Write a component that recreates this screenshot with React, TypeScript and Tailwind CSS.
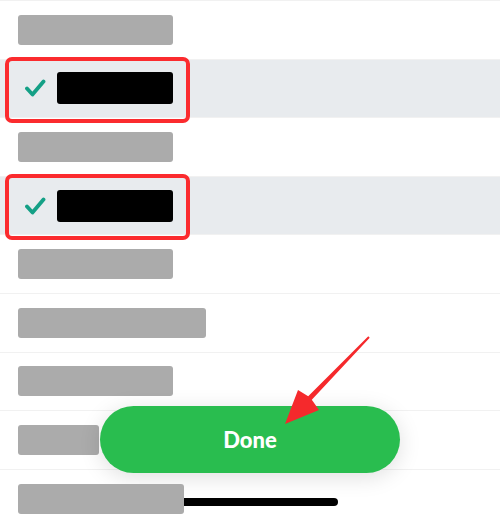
import React from "react";

type Row = { width: number; selected?: boolean };

const rows: Row[] = [
  { width: 155 },
  { width: 116, selected: true },
  { width: 155 },
  { width: 116, selected: true },
  { width: 155 },
  { width: 188 },
  { width: 155 },
  { width: 81 },
  { width: 166 },
];

function Check() {
  return (
    <svg width="22" height="20" viewBox="0 0 22 20" className="shrink-0">
      <path
        d="M3 10.5 L8.5 16.5 L19.5 3.5"
        fill="none"
        stroke="#14a086"
        strokeWidth="3.8"
        strokeLinecap="round"
        strokeLinejoin="round"
      />
    </svg>
  );
}

function ListRow({ row, last }: { row: Row; last: boolean }) {
  return (
    <div
      className={
        "relative flex h-[58.6px] items-center border-t border-[#f1f1f1] pl-[18px] " +
        (row.selected ? "bg-[#e8ebee]" : "bg-white")
      }
    >
      {row.selected ? (
        <>
          <div className="flex items-center gap-[11px] pl-[6px]">
            <Check />
            <div className="h-[32px] rounded-[3px] bg-black" style={{ width: row.width }} />
          </div>
          <div className="pointer-events-none absolute left-[5px] top-[-3px] z-10 h-[66px] w-[185px] rounded-[7px] border-4 border-[#fb2b2e]" />
        </>
      ) : (
        <div
          className={"h-[30px] rounded-[3px] bg-[#ababab] " + (last ? "relative z-20" : "")}
          style={{ width: row.width }}
        />
      )}
    </div>
  );
}

export default function App() {
  return (
    <div className="relative h-[517px] w-[500px] overflow-hidden bg-white" style={{ fontFamily: '"Open Sans", sans-serif' }}>
      <div className="flex flex-col">
        {rows.map((row, i) => (
          <ListRow key={i} row={row} last={i === rows.length - 1} />
        ))}
      </div>

      {/* Done button */}
      <button
        type="button"
        className="absolute left-[100px] top-[406px] z-10 flex h-[67px] w-[300px] items-center justify-center rounded-full bg-[#29bd4f] font-['Lato',sans-serif] text-[22px] font-black text-white shadow-[0_4px_22px_rgba(0,0,0,0.13)]"
      >
        Done
      </button>

      {/* home indicator */}
      <div className="absolute left-[162px] top-[498px] z-10 h-[8px] w-[176px] rounded-full bg-black" />

      {/* annotation arrow */}
      <svg className="pointer-events-none absolute left-0 top-0 z-30" width="500" height="517">
        <polygon
          points="368.3,336.3 369.7,337.7 311.8,399.7 319,410 285,424 298,390 308.2,396.3"
          fill="#f5292c"
        />
      </svg>
    </div>
  );
}
